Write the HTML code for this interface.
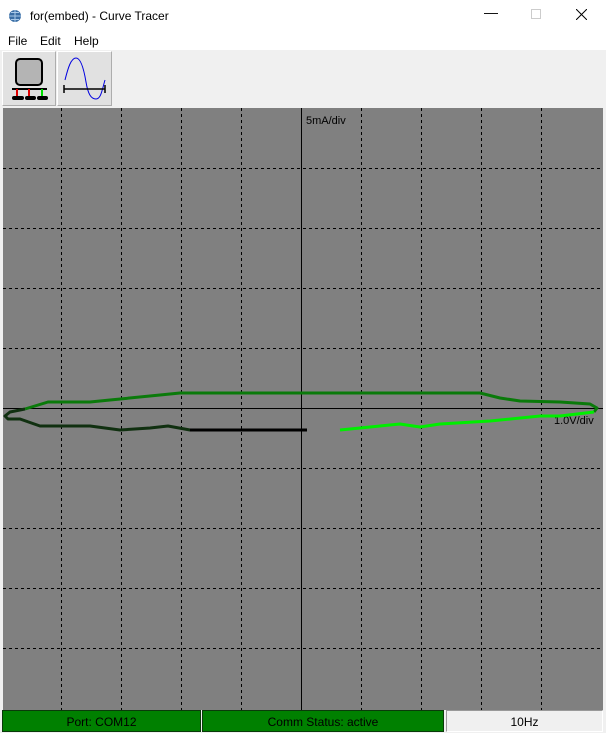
<!DOCTYPE html>
<html><head><style>
*{margin:0;padding:0;box-sizing:border-box}
body{width:606px;height:733px;background:#f0f0f0;font-family:"Liberation Sans",sans-serif;font-size:12px;position:relative;overflow:hidden}
.title{position:absolute;left:0;top:0;width:606px;height:31px;background:#fff}
.menu{position:absolute;left:0;top:31px;width:606px;height:19px;background:#fff}
.abs{position:absolute}
.btn{position:absolute;top:51px;height:55px;border:1px solid #adadad;background:#e1e1e1;border-top-color:#fff;border-left-color:#fff}
.st{position:absolute;top:710px;height:22px;text-align:center;line-height:22px;font-size:12px}
</style></head><body>
<div class="title">
<svg class="abs" style="left:8px;top:9px" width="14" height="14"><circle cx="7" cy="7" r="6" fill="#3a6ea5"/><path d="M1 7h12M7 1v12M3 3.5h8M3 10.5h8" stroke="#a8c8e8" stroke-width="1"/></svg>
<div class="abs" style="left:30px;top:9px;font-size:12px">for(embed) - Curve Tracer</div>
<div class="abs" style="left:484px;top:4px;font-size:14px">&#8212;</div>
<div class="abs" style="left:531px;top:9px;width:10px;height:10px;border:1px solid #ccc"></div>
<svg class="abs" style="left:576px;top:9px" width="11" height="11"><path d="M0 0L11 11M11 0L0 11" stroke="#000" stroke-width="1"/></svg>
</div>
<div class="menu"><span class="abs" style="left:8px;top:3px">File</span><span class="abs" style="left:40px;top:3px">Edit</span><span class="abs" style="left:74px;top:3px">Help</span></div>
<div class="btn" style="left:2px;width:54px">
<svg width="54" height="54"><rect x="13" y="7" width="26" height="26" rx="4" fill="#b4b4b4" stroke="#000" stroke-width="2"/><line x1="9" y1="37" x2="44" y2="37" stroke="#000" stroke-width="2"/><path d="M14 37v7M26 37v7" stroke="#e00000" stroke-width="2"/><path d="M39 37v7" stroke="#00e000" stroke-width="2"/><path d="M11 46h8M24 46h7M36 46h7" stroke="#000" stroke-width="4" stroke-linecap="round"/></svg></div>
<div class="btn" style="left:57px;width:55px">
<svg width="55" height="54"><path d="M7 28C10 16 13 6 18 6S26 18 28 30S33 47 38 47S44 38 47 28" fill="none" stroke="#0000e0" stroke-width="1"/><path d="M6 37h41M6 33v8M47 33v8" stroke="#000" stroke-width="1.5"/></svg></div>
<svg class="abs" style="left:0;top:106px" width="606" height="604">
<rect x="0" y="0" width="606" height="604" fill="#f0f0f0"/>
<rect x="3" y="2" width="600" height="602" fill="#808080"/>
<g stroke="#000" stroke-width="1" stroke-dasharray="3,3">
<path d="M61.5 2v602M121.5 2v602M181.5 2v602M241.5 2v602M361.5 2v602M421.5 2v602M481.5 2v602M541.5 2v602"/>
<path d="M3 62.5h600M3 122.5h600M3 182.5h600M3 242.5h600M3 362.5h600M3 422.5h600M3 482.5h600M3 542.5h600"/>
</g>
<path d="M301.5 2v602M3 302.5h600" stroke="#000"/>
<text x="306" y="18" font-size="11" font-family="Liberation Sans">5mA/div</text>
<text x="554" y="318" font-size="11" font-family="Liberation Sans">1.0V/div</text>
<g fill="none" stroke-width="3" stroke-linejoin="round">
<path d="M25 303L48 296L90 296L110 294L160 289L180 287L480 287L500 292L520 295L560 296L590 298L597 302L594 306" stroke="#0a7a0a"/>
<path d="M594 306L560 310L540 310L490 315L440 318L420 321L400 318L380 320L340 324" stroke="#00ee00"/>
<path d="M25 303L10 306L5 310L8 313L20 313L40 320L90 320L120 324L150 322L168 320L190 324L307 324" stroke="#103010"/>
<path d="M190 324L307 324" stroke="#000"/>
</g>
</svg>
<div class="st" style="left:2px;width:199px;background:#008000;border:1px solid #0a3a0a">Port: COM12</div>
<div class="st" style="left:202px;width:242px;background:#008000;border:1px solid #0a3a0a">Comm Status: active</div>
<div class="st" style="left:446px;width:157px;background:#f0f0f0;border:1px solid #999;border-right-color:#fff;border-bottom-color:#fff">10Hz</div>
</body></html>
